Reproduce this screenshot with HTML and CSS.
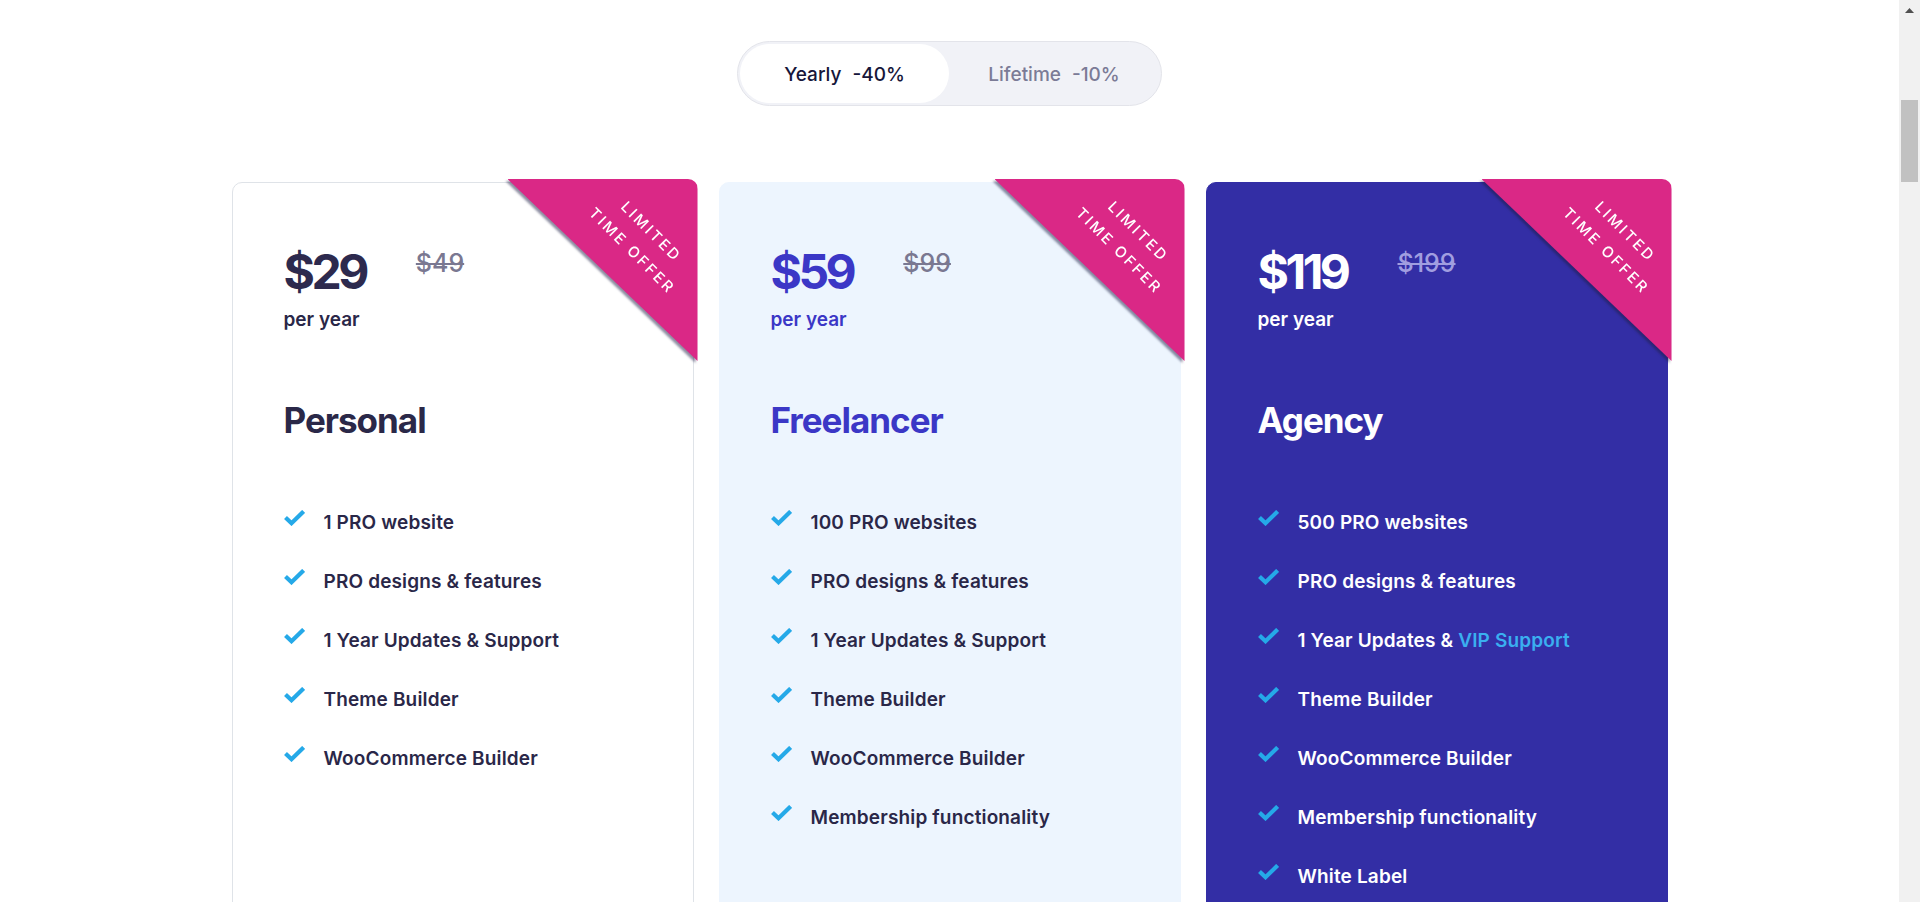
FILE: index.html
```html
<!DOCTYPE html>
<html lang="en">
<head>
<meta charset="utf-8">
<title>Pricing</title>
<link rel="stylesheet" href="styles.css">
</head>
<body>
<div class="page">
  <main class="main">
    <div class="toggle-wrap">
      <div class="toggle">
        <div class="toggle-btn active">Yearly<span class="disc">-40%</span></div>
        <div class="toggle-btn">Lifetime<span class="disc">-10%</span></div>
      </div>
    </div>

    <div class="cards">
      <section class="card card-personal">
        <div class="ribbon"><div class="ribbon-shape"><div class="ribbon-text">Limited<br>Time Offer</div></div></div>
        <div class="price-row">
          <div class="price">$29</div>
          <div class="old-price">$49</div>
        </div>
        <div class="per">per year</div>
        <h2 class="plan">Personal</h2>
        <ul class="features">
          <li><svg class="check" viewBox="0 0 21 16"><polyline points="1.5,7.5 7.5,13.2 19.6,1.4"/></svg><span>1 PRO website</span></li>
          <li><svg class="check" viewBox="0 0 21 16"><polyline points="1.5,7.5 7.5,13.2 19.6,1.4"/></svg><span>PRO designs &amp; features</span></li>
          <li><svg class="check" viewBox="0 0 21 16"><polyline points="1.5,7.5 7.5,13.2 19.6,1.4"/></svg><span>1 Year Updates &amp; Support</span></li>
          <li><svg class="check" viewBox="0 0 21 16"><polyline points="1.5,7.5 7.5,13.2 19.6,1.4"/></svg><span>Theme Builder</span></li>
          <li><svg class="check" viewBox="0 0 21 16"><polyline points="1.5,7.5 7.5,13.2 19.6,1.4"/></svg><span>WooCommerce Builder</span></li>
        </ul>
      </section>

      <section class="card card-freelancer">
        <div class="ribbon"><div class="ribbon-shape"><div class="ribbon-text">Limited<br>Time Offer</div></div></div>
        <div class="price-row">
          <div class="price">$59</div>
          <div class="old-price">$99</div>
        </div>
        <div class="per">per year</div>
        <h2 class="plan">Freelancer</h2>
        <ul class="features">
          <li><svg class="check" viewBox="0 0 21 16"><polyline points="1.5,7.5 7.5,13.2 19.6,1.4"/></svg><span>100 PRO websites</span></li>
          <li><svg class="check" viewBox="0 0 21 16"><polyline points="1.5,7.5 7.5,13.2 19.6,1.4"/></svg><span>PRO designs &amp; features</span></li>
          <li><svg class="check" viewBox="0 0 21 16"><polyline points="1.5,7.5 7.5,13.2 19.6,1.4"/></svg><span>1 Year Updates &amp; Support</span></li>
          <li><svg class="check" viewBox="0 0 21 16"><polyline points="1.5,7.5 7.5,13.2 19.6,1.4"/></svg><span>Theme Builder</span></li>
          <li><svg class="check" viewBox="0 0 21 16"><polyline points="1.5,7.5 7.5,13.2 19.6,1.4"/></svg><span>WooCommerce Builder</span></li>
          <li><svg class="check" viewBox="0 0 21 16"><polyline points="1.5,7.5 7.5,13.2 19.6,1.4"/></svg><span>Membership functionality</span></li>
        </ul>
      </section>

      <section class="card card-agency">
        <div class="ribbon"><div class="ribbon-shape"><div class="ribbon-text">Limited<br>Time Offer</div></div></div>
        <div class="price-row">
          <div class="price">$119</div>
          <div class="old-price">$199</div>
        </div>
        <div class="per">per year</div>
        <h2 class="plan">Agency</h2>
        <ul class="features">
          <li><svg class="check" viewBox="0 0 21 16"><polyline points="1.5,7.5 7.5,13.2 19.6,1.4"/></svg><span>500 PRO websites</span></li>
          <li><svg class="check" viewBox="0 0 21 16"><polyline points="1.5,7.5 7.5,13.2 19.6,1.4"/></svg><span>PRO designs &amp; features</span></li>
          <li><svg class="check" viewBox="0 0 21 16"><polyline points="1.5,7.5 7.5,13.2 19.6,1.4"/></svg><span>1 Year Updates &amp; <span class="vip">VIP Support</span></span></li>
          <li><svg class="check" viewBox="0 0 21 16"><polyline points="1.5,7.5 7.5,13.2 19.6,1.4"/></svg><span>Theme Builder</span></li>
          <li><svg class="check" viewBox="0 0 21 16"><polyline points="1.5,7.5 7.5,13.2 19.6,1.4"/></svg><span>WooCommerce Builder</span></li>
          <li><svg class="check" viewBox="0 0 21 16"><polyline points="1.5,7.5 7.5,13.2 19.6,1.4"/></svg><span>Membership functionality</span></li>
          <li><svg class="check" viewBox="0 0 21 16"><polyline points="1.5,7.5 7.5,13.2 19.6,1.4"/></svg><span>White Label</span></li>
        </ul>
      </section>
    </div>
  </main>

  <aside class="scrollbar">
    <div class="sb-arrow"><svg viewBox="0 0 9 5" width="9" height="5"><polygon points="0,5 4.5,0 9,5" fill="#505050"/></svg></div>
    <div class="sb-thumb"></div>
  </aside>
</div>
</body>
</html>
```

FILE: styles.css
```css
html, body {
  margin: 0;
  padding: 0;
  height: 100%;
  overflow: hidden;
  background: #ffffff;
}

body {
  font-family: Inter, "Liberation Sans", sans-serif;
  color: #2a2748;
}

.page {
  display: flex;
  height: 100vh;
}

.main {
  flex: 1;
  min-width: 0;
  padding-top: 41px;
}

/* Toggle */
.toggle-wrap {
  display: flex;
  justify-content: center;
}

.toggle {
  display: flex;
  width: 425px;
  box-sizing: border-box;
  padding: 2px;
  background: #f1f2f7;
  border: 1px solid #e3e4ea;
  border-radius: 33px;
}

.toggle-btn {
  flex: 0 0 209px;
  height: 59px;
  display: flex;
  align-items: center;
  justify-content: center;
  padding-top: 2px;
  box-sizing: border-box;
  font-size: 19px;
  font-weight: 500;
  color: #7b7b96;
  border-radius: 30px;
}

.toggle-btn + .toggle-btn {
  flex: 1;
}

.toggle-btn.active {
  background: #ffffff;
  color: #16163a;
}

.disc {
  margin-left: 11px;
}

/* Cards */
.cards {
  display: flex;
  justify-content: center;
  gap: 25px;
  margin-top: 76px;
}

.card {
  position: relative;
  width: 462px;
  min-height: 900px;
  box-sizing: border-box;
  padding: 65px 40px 40px 51px;
  border: 1px solid #dfe3e8;
  border-radius: 10px;
  background: #ffffff;
}

.card-freelancer {
  background: #edf5fe;
  border-color: #edf5fe;
}

.card-agency {
  background: #332ea5;
  border-color: #332ea5;
  color: #ffffff;
}

/* Ribbon */
.ribbon {
  position: absolute;
  top: -4px;
  right: -5px;
  width: 190px;
  height: 182px;
  filter: drop-shadow(-2px 2px 1px rgba(30, 30, 70, 0.5));
}

.ribbon-shape {
  position: relative;
  width: 100%;
  height: 100%;
  background: #da2886;
  border-top-right-radius: 10px;
  clip-path: polygon(0 0, 100% 0, 100% 100%);
}

.ribbon-text {
  position: absolute;
  left: 134px;
  top: 62px;
  transform: translate(-50%, -50%) rotate(45deg);
  color: #ffffff;
  font-size: 15px;
  font-weight: 500;
  letter-spacing: 2.6px;
  line-height: 27px;
  text-transform: uppercase;
  text-align: center;
  white-space: nowrap;
}

/* Price */
.price-row {
  display: flex;
  align-items: flex-start;
  gap: 50px;
}

.price {
  font-size: 48px;
  line-height: 48px;
  font-weight: 700;
  letter-spacing: -3.5px;
  color: #2d2a4e;
}

.old-price {
  margin-top: 3px;
  font-size: 25px;
  line-height: 25px;
  font-weight: 500;
  color: #7a7891;
  text-decoration: line-through;
  text-decoration-thickness: 2px;
}

.per {
  margin-top: 12px;
  font-size: 19px;
  line-height: 24px;
  font-weight: 600;
}

.plan {
  margin: 67px 0 0;
  font-size: 35px;
  line-height: 42px;
  font-weight: 700;
  letter-spacing: -1px;
  color: #2a2848;
}

.card-freelancer .price,
.card-freelancer .per,
.card-freelancer .plan {
  color: #3b37c6;
}

.card-agency .price,
.card-agency .per,
.card-agency .plan {
  color: #ffffff;
}

.card-agency .old-price {
  color: #a19ee0;
}

/* Features */
.features {
  list-style: none;
  margin: 68px 0 0;
  padding: 0;
  display: flex;
  flex-direction: column;
  gap: 32px;
}

.features li {
  display: flex;
  align-items: flex-start;
  gap: 19px;
  font-size: 19px;
  line-height: 27px;
  font-weight: 600;
  letter-spacing: 0.15px;
}

.check {
  flex: 0 0 21px;
  width: 21px;
  height: 16px;
  margin-top: 1px;
  fill: none;
  stroke: #25a9e8;
  stroke-width: 4.2;
  stroke-linejoin: miter;
}

.vip {
  color: #3aaff0;
}

/* Scrollbar */
.scrollbar {
  flex: 0 0 21px;
  background: #f1f1f1;
  display: flex;
  flex-direction: column;
}

.sb-arrow {
  height: 21px;
  display: flex;
  align-items: center;
  justify-content: center;
}

.sb-thumb {
  margin: 79px 2px 0 2px;
  height: 82px;
  background: #c1c1c1;
}
```
